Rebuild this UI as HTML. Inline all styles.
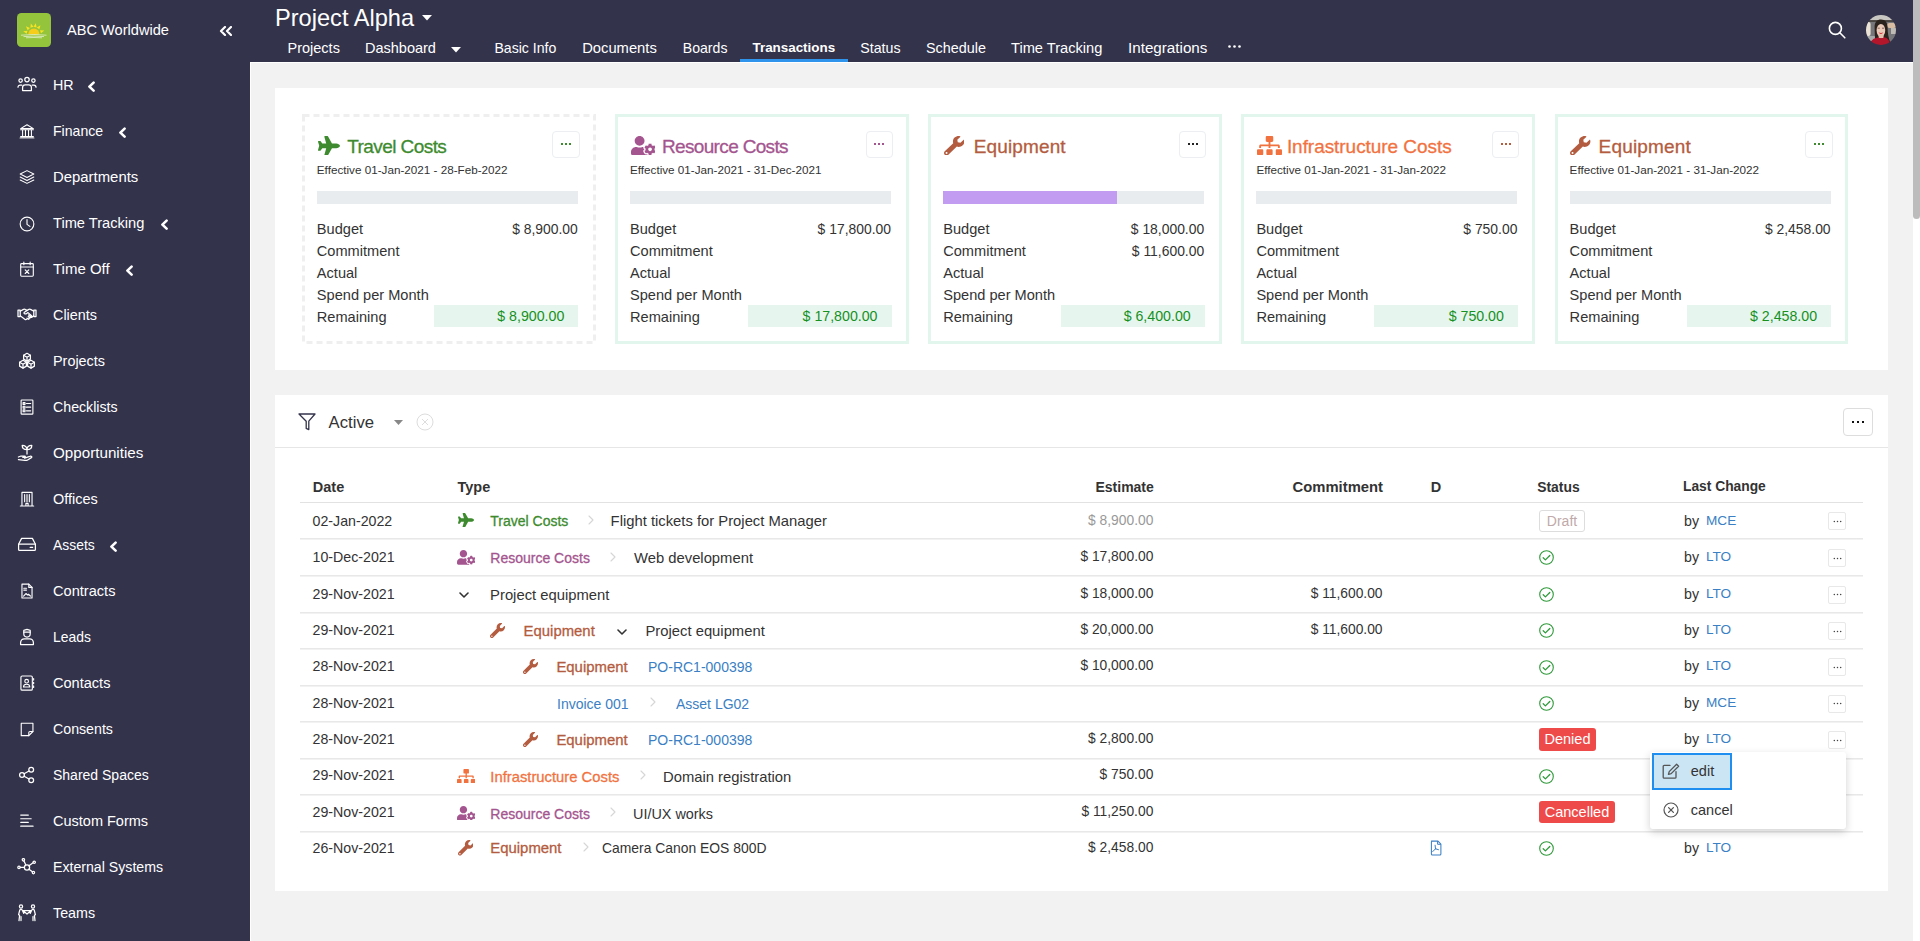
<!DOCTYPE html>
<html><head><meta charset="utf-8">
<style>
*{box-sizing:border-box;margin:0;padding:0}
html,body{width:1920px;height:941px;overflow:hidden;background:#f2f2f2;font-family:"Liberation Sans",sans-serif;color:#333}
svg{display:block}
#sb{position:absolute;left:0;top:0;width:250px;height:941px;background:#33334b}
#hd{position:absolute;left:250px;top:0;width:1663px;height:62px;background:#33334b}
#vline{position:absolute;left:250px;top:62px;width:1px;height:879px;background:#fff}
#hline{position:absolute;left:250px;top:62px;width:1663px;height:1px;background:#fff}
.logo{position:absolute;left:17px;top:13px}
.brand{position:absolute;left:67px;top:20px;line-height:20px;font-size:14.6px;color:#fff;white-space:nowrap}
.collapse{position:absolute;left:218.5px;top:25.5px}
.nav{position:absolute;left:0;width:250px;height:46px;line-height:46px;font-size:14.5px;color:#fff;white-space:nowrap}
.nav .ic{position:absolute;left:17px;top:14px}
.nav .tx{position:absolute;left:53px;top:0}
.nav .arr{position:absolute;top:19px}
.ptitle{position:absolute;left:275px;top:3px;font-size:23.6px;line-height:30px;color:#fff;white-space:nowrap}
.ptcaret{position:absolute;left:421.5px;top:14.5px}
.tabs{position:absolute;left:0;top:0}
.tab{position:absolute;top:38px;font-size:14.5px;line-height:20px;color:#fff;white-space:nowrap}
.tab.act{font-weight:bold;font-size:13.6px}
.uline{position:absolute;left:740px;top:59px;width:107.5px;height:3px;background:#2f95ec}
.dcaret{position:absolute;left:451px;top:46.5px}
.more{position:absolute;left:1227.5px;top:45px}
.search{position:absolute;left:1828px;top:21px}
.avatar{position:absolute;left:1866px;top:15px}
.scroll{position:absolute;left:1913px;top:0;width:7px;height:941px;background:#fff}
.thumb{position:absolute;left:1913px;top:0;width:7px;height:219px;background:#bcbcbc;border-radius:0 0 3.5px 3.5px}
.panel{position:absolute;background:#fff}
.card{position:absolute;top:114px;width:293.8px;height:230px;border:3px solid #e3f6ee;background:#fff}
.card.dash{border:3px solid transparent}
.dashsvg{position:absolute;left:-3px;top:-3px}
.card .ttl{position:absolute;top:18px;font-size:19px;letter-spacing:-0.45px;line-height:24px;white-space:nowrap;-webkit-text-stroke:0.3px currentColor}
.card .cic{position:absolute;left:12.8px;top:18.5px}
.card .eff{position:absolute;left:12px;top:45px;font-size:11.7px;line-height:16px;color:#333;white-space:nowrap}
.card .dots{position:absolute;left:247.5px;top:13.5px;width:27.5px;height:27.6px;border:1px solid #eceef1;border-radius:4px}
.card .bar{position:absolute;left:12px;top:74px;width:261px;height:13px;background:#e9ecef}
.card .fill{position:absolute;left:0;top:0;height:13px;background:#c29cf0}
.card .rows{position:absolute;left:12px;top:100.5px;width:261px;font-size:14.6px;line-height:22.2px;color:#333}
.card .r{position:relative;height:22.2px;white-space:nowrap}
.card .r .v{position:absolute;right:0;top:0;font-size:13.9px}
.card .rem{position:absolute;left:117.5px;top:87.3px;width:144px;height:22px;line-height:22px;background:#e6f6ee;color:#17901f;text-align:right;padding-right:14px;font-size:14.2px}
.fbar{position:absolute;left:275px;top:395px;width:1613px;height:53px;border-bottom:1px solid #e6e6e6}
.funnel{position:absolute;left:298px;top:413px}
.active{position:absolute;left:328.6px;top:411px;font-size:16.7px;line-height:24px;white-space:nowrap}
.fcaret{position:absolute;left:394px;top:420px}
.fx{position:absolute;left:416px;top:412.6px}
.bigbtn{position:absolute;left:1843px;top:408px;width:30px;height:28px;border:1px solid #ddd;border-radius:4px;padding:12px 0 0 8px}
.bigbtn svg{position:absolute;left:8px;top:12px}
.th{position:absolute;top:477px;font-size:14.5px;line-height:20px;font-weight:bold;white-space:nowrap;color:#333}
.thline{position:absolute;left:300px;top:502px;width:1563px;height:1px;background:#e2e2e2}
.rline{position:absolute;left:300px;width:1563px;height:2px;border-top:1px solid #e8e8e8;background:#f2f2f2}
.p{position:absolute;font-size:14.5px;line-height:20px;white-space:nowrap}
.est{right:766.7px;text-align:right;font-size:13.8px}
.com{right:537.5px;text-align:right;font-size:13.8px}
.draft{width:46px;height:22px;line-height:20px;border:1px solid #ddd;border-radius:3px;color:#bfaaaa;text-align:center;font-size:14px}
.badge{height:22.5px;line-height:22px;background:#ef4a4a;color:#fff;border-radius:3px;text-align:center;font-size:14.5px}
.rd{width:18px;height:18px;border:1px solid #e8e8e8;border-radius:2px;padding:6.8px 0 0 4.2px}
.menu{position:absolute;left:1650px;top:752px;width:196px;height:76.5px;background:#fff;border-radius:3px;box-shadow:0 3px 8px rgba(0,0,0,.18)}
.mi{position:absolute;left:1652px;top:753px;width:80px;height:37px;background:#cbe5f5;border:2px solid #1e8ff0}
.mtxt{position:absolute;font-size:14.5px;line-height:20px;color:#333}
</style></head><body>
<div id="sb">
<span class="logo"><svg width="34" height="34" viewBox="0 0 34 34" ><rect width="34" height="34" rx="4.5" fill="#94c43c"/>
<path d="M11.25 21.2a5.6 5.6 0 0 1 11.2 0z" fill="#f6cd1b"/>
<g fill="#f8e320"><path d="M10.50 17.64L6.22 18.15L9.67 20.73z"/><path d="M12.93 14.99L8.94 13.36L10.70 17.29z"/><path d="M16.46 13.83L13.82 10.43L13.38 14.71z"/><path d="M19.64 14.38L18.76 10.17L16.49 13.83z"/><path d="M22.34 16.37L23.47 12.22L19.78 14.45z"/><path d="M24.00 20.30L27.28 17.51L22.98 17.26z"/></g>
<path d="M4 22.2q13-1.4 25.5 0M6.5 23.6q10.5-1 20.5 0M9 24.8q8-.6 16 0" fill="none" stroke="#fff" stroke-width=".7" opacity=".85"/></svg></span>
<div class="brand">ABC Worldwide</div>
<span class="collapse"><svg width="13" height="10" viewBox="0 0 13 10" ><path d="M6 1L2 5l4 4M12 1L8 5l4 4" fill="none" stroke="#fff" stroke-width="2.2" stroke-linecap="round" stroke-linejoin="round"/></svg></span>
<div class="nav" style="top:62px"><span class="ic"><svg width="20" height="16" viewBox="0 0 20 16" ><g fill="none" stroke="#fff" stroke-width="1.25" stroke-linecap="round" stroke-linejoin="round"><circle cx="10" cy="3.6" r="2.2"/><circle cx="3.6" cy="4.6" r="1.7"/><circle cx="16.4" cy="4.6" r="1.7"/><path d="M5.6 14.6v-3.2a2.6 2.6 0 0 1 2.6-2.6h3.6a2.6 2.6 0 0 1 2.6 2.6v3.2z"/><path d="M1 11.2a2.2 2.2 0 0 1 2.2-2.2h1.6"/><path d="M19 11.2a2.2 2.2 0 0 0-2.2-2.2h-1.6"/></g></svg></span><span class="tx" style="font-size:14.3px">HR</span><span class="arr" style="left:87px"><svg width="9" height="11" viewBox="0 0 9 11" ><path d="M6.6 1.6L2.4 5.6l4.2 4" fill="none" stroke="#fff" stroke-width="2.6" stroke-linecap="round" stroke-linejoin="round"/></svg></span></div>
<div class="nav" style="top:108px"><span class="ic"><svg style="transform:scale(0.85);transform-origin:50% 50%" width="20" height="18" viewBox="0 0 20 18" ><g fill="none" stroke="#fff" stroke-width="1.25" stroke-linecap="round" stroke-linejoin="round"><path d="M2.5 6.2L10 1.6l7.5 4.6z"/><path d="M2.5 7.6h15M4.8 8.5v6M8.2 8.5v6M11.8 8.5v6M15.2 8.5v6M2.5 15.6h15M1.8 17.2h16.4"/></g></svg></span><span class="tx" style="font-size:14.1px">Finance</span><span class="arr" style="left:118px"><svg width="9" height="11" viewBox="0 0 9 11" ><path d="M6.6 1.6L2.4 5.6l4.2 4" fill="none" stroke="#fff" stroke-width="2.6" stroke-linecap="round" stroke-linejoin="round"/></svg></span></div>
<div class="nav" style="top:154px"><span class="ic"><svg style="transform:scale(0.85);transform-origin:50% 50%" width="20" height="18" viewBox="0 0 20 18" ><g fill="none" stroke="#fff" stroke-width="1.25" stroke-linecap="round" stroke-linejoin="round"><path d="M10 1.5l8 4-8 4-8-4z"/><path d="M2 9l8 4 8-4"/><path d="M2 12.5l8 4 8-4"/></g></svg></span><span class="tx" style="font-size:14.9px">Departments</span></div>
<div class="nav" style="top:200px"><span class="ic"><svg style="transform:scale(0.9);transform-origin:50% 50%" width="20" height="20" viewBox="0 0 20 20" ><g fill="none" stroke="#fff" stroke-width="1.25" stroke-linecap="round" stroke-linejoin="round"><circle cx="10" cy="10" r="7.6"/><path d="M10 5.2v5.2l3.2 2.2"/></g></svg></span><span class="tx" style="font-size:14.65px">Time Tracking</span><span class="arr" style="left:159.5px"><svg width="9" height="11" viewBox="0 0 9 11" ><path d="M6.6 1.6L2.4 5.6l4.2 4" fill="none" stroke="#fff" stroke-width="2.6" stroke-linecap="round" stroke-linejoin="round"/></svg></span></div>
<div class="nav" style="top:246px"><span class="ic"><svg style="transform:scale(0.9);transform-origin:50% 50%" width="20" height="18" viewBox="0 0 20 18" ><g fill="none" stroke="#fff" stroke-width="1.25" stroke-linecap="round" stroke-linejoin="round"><rect x="3" y="3" width="14" height="14" rx="1"/><path d="M3 6.8h14M6.5 1.2v3M13.5 1.2v3M8 10l4 4M12 10l-4 4"/></g></svg></span><span class="tx" style="font-size:15.0px">Time Off</span><span class="arr" style="left:125px"><svg width="9" height="11" viewBox="0 0 9 11" ><path d="M6.6 1.6L2.4 5.6l4.2 4" fill="none" stroke="#fff" stroke-width="2.6" stroke-linecap="round" stroke-linejoin="round"/></svg></span></div>
<div class="nav" style="top:292px"><span class="ic"><svg width="20" height="16" viewBox="0 0 20 16" ><g fill="none" stroke="#fff" stroke-width="1.25" stroke-linecap="round" stroke-linejoin="round"><path d="M1 4h2.2v6.6H1zM16.8 4H19v6.6h-2.2z"/><path d="M3.2 5.2l2.8-1.6c.9-.5 1.8-.5 2.6 0l1.4.7M16.8 5.2l-2.8-1.6c-.9-.5-1.8-.5-2.6 0L7.4 6.2c-.7.5-.5 1.5.4 1.6l1.2.1 2-1.3 3.6 3.2c.6.5-.1 1.4-.8 1l-2.2-1.8M3.2 9.8l4.6 3.4c.7.5 1.5.4 2-.1M13.6 10.9c.5.5-.2 1.3-.8.9l-1.6-1.2M12 12.3c.4.5-.2 1.2-.8.8l-1.2-.9M16.8 9.8l-2.2 1.6"/></g></svg></span><span class="tx" style="font-size:14.4px">Clients</span></div>
<div class="nav" style="top:338px"><span class="ic"><svg width="20" height="18" viewBox="0 0 20 18" ><g fill="none" stroke="#fff" stroke-width="1.25" stroke-linecap="round" stroke-linejoin="round"><path d="M10 1.3000000000000003l3.39 1.95v3.90l-3.39 1.95-3.39-1.95v-3.90z"/><path d="M6.61 3.25L10 5.2l3.39-1.95M10 5.2v3.90"/><path d="M6 8.299999999999999l3.39 1.95v3.90l-3.39 1.95-3.39-1.95v-3.90z"/><path d="M2.61 10.25L6 12.2l3.39-1.95M6 12.2v3.90"/><path d="M14 8.299999999999999l3.39 1.95v3.90l-3.39 1.95-3.39-1.95v-3.90z"/><path d="M10.61 10.25L14 12.2l3.39-1.95M14 12.2v3.90"/></g></svg></span><span class="tx" style="font-size:14.4px">Projects</span></div>
<div class="nav" style="top:384px"><span class="ic"><svg style="transform:scale(0.92);transform-origin:50% 50%" width="20" height="18" viewBox="0 0 20 18" ><g fill="none" stroke="#fff" stroke-width="1.25" stroke-linecap="round" stroke-linejoin="round"><rect x="3.6" y="1.4" width="12.8" height="15.4" rx=".8"/><path d="M5.8 4.2h2v2h-2zM5.8 8.2h2v2h-2zM5.8 12.2h2v2h-2zM9.4 5.2h4.6M9.4 9.2h4.6M9.4 13.2h4.6"/></g></svg></span><span class="tx" style="font-size:14.2px">Checklists</span></div>
<div class="nav" style="top:430px"><span class="ic"><svg width="20" height="18" viewBox="0 0 20 18" ><g fill="none" stroke="#fff" stroke-width="1.25" stroke-linecap="round" stroke-linejoin="round"><path d="M10 10V5.6M10 5.6C10 3 8 1.4 5.2 1.4c0 2.6 2 4.2 4.8 4.2zM10 5.6c0-2.6 2-4.2 4.8-4.2 0 2.6-2 4.2-4.8 4.2z"/><path d="M1.4 13l2.6-1h3.6c1 0 1 1.4 0 1.4H5.8M7.6 14.2l5.2-1.8c1.6-.6 2.6.6 1.6 1.2l-3.8 2.4c-.8.5-1.6.6-2.6.4L1.4 15.6"/></g></svg></span><span class="tx" style="font-size:15.2px">Opportunities</span></div>
<div class="nav" style="top:476px"><span class="ic"><svg style="transform:scale(0.9);transform-origin:50% 50%" width="20" height="18" viewBox="0 0 20 18" ><g fill="none" stroke="#fff" stroke-width="1.25" stroke-linecap="round" stroke-linejoin="round"><path d="M4.4 16.8V1.6h11.2v15.2M2.6 16.8h14.8M7.4 4v8M10 4v8M12.6 4v8M8.8 16.8v-3h2.4v3"/></g></svg></span><span class="tx" style="font-size:14.5px">Offices</span></div>
<div class="nav" style="top:522px"><span class="ic"><svg width="20" height="16" viewBox="0 0 20 16" ><g fill="none" stroke="#fff" stroke-width="1.25" stroke-linecap="round" stroke-linejoin="round"><path d="M1.6 8.2L4.6 2.4h10.8l3 5.8v5.2c0 .6-.4 1-1 1H2.6c-.6 0-1-.4-1-1z"/><path d="M1.6 8.2h16.8M13.2 11.4h2.4"/></g></svg></span><span class="tx" style="font-size:13.9px">Assets</span><span class="arr" style="left:109px"><svg width="9" height="11" viewBox="0 0 9 11" ><path d="M6.6 1.6L2.4 5.6l4.2 4" fill="none" stroke="#fff" stroke-width="2.6" stroke-linecap="round" stroke-linejoin="round"/></svg></span></div>
<div class="nav" style="top:568px"><span class="ic"><svg style="transform:scale(0.9);transform-origin:50% 50%" width="20" height="18" viewBox="0 0 20 18" ><g fill="none" stroke="#fff" stroke-width="1.25" stroke-linecap="round" stroke-linejoin="round"><path d="M4.4 1.4h7.6l3.6 3.6v11.8H4.4z"/><path d="M12 1.4v3.6h3.6M6.4 6h3M6.4 8h3M6.2 14.6l2.6-2.8 1.8 1.6 1-.8 2.2 2"/></g></svg></span><span class="tx" style="font-size:14.6px">Contracts</span></div>
<div class="nav" style="top:614px"><span class="ic"><svg width="20" height="18" viewBox="0 0 20 18" ><g fill="none" stroke="#fff" stroke-width="1.25" stroke-linecap="round" stroke-linejoin="round"><path d="M6.8 2.4l3.2-1 3.2 1v3.4a3.2 3.2 0 0 1-6.4 0z"/><path d="M6.8 4h6.4M3.6 16.6v-1.8c0-2.2 1.6-4 3.8-4h5.2c2.2 0 3.8 1.8 3.8 4v1.8z"/></g></svg></span><span class="tx" style="font-size:13.9px">Leads</span></div>
<div class="nav" style="top:660px"><span class="ic"><svg style="transform:scale(0.92);transform-origin:50% 50%" width="20" height="18" viewBox="0 0 20 18" ><g fill="none" stroke="#fff" stroke-width="1.25" stroke-linecap="round" stroke-linejoin="round"><rect x="3.4" y="1.4" width="12.4" height="15.4" rx="1.4"/><circle cx="9.6" cy="7" r="2"/><path d="M6.2 13.4c0-1.8 1.4-3 3.4-3s3.4 1.2 3.4 3zM17.2 4.2v1.6M17.2 8.2v1.6M17.2 12.2v1.6"/></g></svg></span><span class="tx" style="font-size:14.55px">Contacts</span></div>
<div class="nav" style="top:706px"><span class="ic"><svg style="transform:scale(0.9);transform-origin:50% 50%" width="20" height="18" viewBox="0 0 20 18" ><g fill="none" stroke="#fff" stroke-width="1.25" stroke-linecap="round" stroke-linejoin="round"><path d="M3.6 2.6h13v9.2l-4.6 4.6H3.6z"/><path d="M16.6 11.8h-3.4c-.7 0-1.2.5-1.2 1.2v3.4"/></g></svg></span><span class="tx" style="font-size:14.2px">Consents</span></div>
<div class="nav" style="top:752px"><span class="ic"><svg width="20" height="18" viewBox="0 0 20 18" ><g fill="none" stroke="#fff" stroke-width="1.25" stroke-linecap="round" stroke-linejoin="round"><circle cx="5" cy="9" r="2.4"/><circle cx="14.2" cy="3.8" r="2.4"/><circle cx="14.2" cy="14.2" r="2.4"/><path d="M7.1 7.8l4.9-2.8M7.1 10.2l4.9 2.8"/></g></svg></span><span class="tx" style="font-size:14.0px">Shared Spaces</span></div>
<div class="nav" style="top:798px"><span class="ic"><svg style="transform:scale(0.95);transform-origin:50% 50%" width="20" height="18" viewBox="0 0 20 18" ><g fill="none" stroke="#fff" stroke-width="1.25" stroke-linecap="round" stroke-linejoin="round"><path d="M3.4 2.8h8M3.4 6.6h11M3.4 10.4h8M3.4 14.4h13"/></g></svg></span><span class="tx" style="font-size:14.5px">Custom Forms</span></div>
<div class="nav" style="top:844px"><span class="ic"><svg width="20" height="18" viewBox="0 0 20 18" ><g fill="none" stroke="#fff" stroke-width="1.25" stroke-linecap="round" stroke-linejoin="round"><circle cx="10" cy="9.4" r="2.6"/><circle cx="6.4" cy="1.8" r="1.2"/><circle cx="17.2" cy="4.2" r="1.2"/><circle cx="2" cy="9.4" r="1.2"/><circle cx="16.4" cy="14.6" r="1.2"/><path d="M7 3l1.8 4M16 4.8l-4 3M3.2 9.4h4.2M15.4 13.8l-3.4-2.6"/></g></svg></span><span class="tx" style="font-size:14.15px">External Systems</span></div>
<div class="nav" style="top:890px"><span class="ic"><svg width="20" height="18" viewBox="0 0 20 18" ><g fill="none" stroke="#fff" stroke-width="1.25" stroke-linecap="round" stroke-linejoin="round"><circle cx="4" cy="2.4" r="1.6"/><circle cx="16" cy="2.4" r="1.6"/><path d="M2 16.6l.6-5.4-1-.6L2.8 6c.4-1 2-1 2.4 0l1.6 3.4M18 16.6l-.6-5.4 1-.6L17.2 6c-.4-1-2-1-2.4 0l-1.6 3.4M4 16.6v-4M16 16.6v-4M6 6.6h8l-4 3.4z"/></g></svg></span><span class="tx" style="font-size:14.3px">Teams</span></div>
</div>
<div id="hd"></div>
<div id="vline"></div><div id="hline"></div>
<div class="ptitle">Project Alpha</div><span class="ptcaret"><svg width="10" height="6" viewBox="0 0 10 6" ><path d="M0 0h10L5 5.5z" fill="#fff"/></svg></span>
<div class="tabs"><span class="tab" style="left:287.5px;font-size:14.5px">Projects</span><span class="tab" style="left:365px;font-size:14.5px">Dashboard</span><span class="tab" style="left:494.4px;font-size:14.1px">Basic Info</span><span class="tab" style="left:582.2px;font-size:14.75px">Documents</span><span class="tab" style="left:682.8px;font-size:14.1px">Boards</span><span class="tab act" style="left:752.5px;font-size:13.4px">Transactions</span><span class="tab" style="left:860.3px;font-size:14.2px">Status</span><span class="tab" style="left:926px;font-size:14.4px">Schedule</span><span class="tab" style="left:1011px;font-size:14.65px">Time Tracking</span><span class="tab" style="left:1128px;font-size:15.2px">Integrations</span></div>
<span class="dcaret"><svg width="10" height="6" viewBox="0 0 10 6" ><path d="M0 0h10L5 5.5z" fill="#fff"/></svg></span>
<span class="more"><svg width="13" height="3" viewBox="0 0 13 3" ><g fill="#fff"><circle cx="1.5" cy="1.5" r="1.3"/><circle cx="6.5" cy="1.5" r="1.3"/><circle cx="11.5" cy="1.5" r="1.3"/></g></svg></span>
<div class="uline"></div>
<span class="search"><svg width="18" height="18" viewBox="0 0 18 18" ><circle cx="7.4" cy="7.4" r="6" fill="none" stroke="#fff" stroke-width="1.6"/><path d="M11.8 11.8l5 5" stroke="#fff" stroke-width="1.6" stroke-linecap="round"/></svg></span>
<span class="avatar"><svg width="30" height="30" viewBox="0 0 30 30" ><defs><clipPath id="av"><circle cx="15" cy="15" r="15"/></clipPath><filter id="bl" x="-10%" y="-10%" width="120%" height="120%"><feGaussianBlur stdDeviation="0.7"/></filter></defs>
<g clip-path="url(#av)"><g filter="url(#bl)"><rect x="-2" y="-2" width="34" height="34" fill="#76777a"/><rect x="-2" y="-2" width="34" height="7.5" fill="#c9c7c1"/><rect x="-2" y="5.2" width="34" height="1.6" fill="#3e3833"/>
<rect x="0" y="7" width="4.6" height="14" rx="2" fill="#ebe3d6"/><rect x="21" y="8" width="9" height="5" rx="2.5" fill="#d9bda2"/><rect x="25" y="13" width="5" height="6" fill="#bfbcb6"/><rect x="0" y="21" width="10" height="9" fill="#a7aaa8"/>
<path d="M8.6 12c0-5 2.4-7.6 6.4-7.6 4.4 0 6.6 3 6.6 8.4 0 5 .8 9.6 2.6 14.6L22 30H9.6c-.6-6-1-12-1-18z" fill="#2b201c"/>
<ellipse cx="14.9" cy="15.4" rx="4.3" ry="6.4" fill="#eacab9"/><path d="M11.6 13.2h2.2M16 13.2h2.2" stroke="#5a3a30" stroke-width=".7"/><rect x="12.6" y="19.5" width="5" height="4" fill="#e4bfad"/>
<path d="M12.4 17.6q2.6 2.6 5 0q-2.4 .6-5 0z" fill="#d0202c"/>
<path d="M3.5 30c.8-4.6 4.6-7.2 8.6-7.6 1.8 1 4.4 1 6.4-.2 2.2.6 4 2 5 4.2L24 30z" fill="#b3122a"/></g></g></svg></span>
<div class="scroll"></div><div class="thumb"></div>

<div class="panel" style="left:275px;top:88px;width:1613px;height:282px"></div>
<div class="card dash" style="left:301.8px"><span class="dashsvg"><svg width="294" height="230" viewBox="0 0 294 230" ><rect x="1.5" y="1.5" width="291" height="227" fill="none" stroke="#efefef" stroke-width="3" stroke-dasharray="6 4"/></svg></span>
<span class="cic"><svg width="22" height="19.7" viewBox="0 0 576 512" preserveAspectRatio="none"><path fill="#3d8b2e" d="M480 192H365.71L260.61 8.06A16.014 16.014 0 0 0 246.71 0h-65.5c-10.63 0-18.3 10.17-15.38 20.39L214.86 192H112l-43.2-57.6c-3.02-4.03-7.77-6.4-12.8-6.4H16.01C5.6 128-2.04 137.78.49 147.88L32 256 .49 364.12C-2.04 374.22 5.6 384 16.01 384H56c5.04 0 9.78-2.37 12.8-6.4L112 320h102.86l-49.03 171.6c-2.92 10.22 4.75 20.4 15.38 20.4h65.5c5.74 0 11.04-3.08 13.89-8.06L365.71 320H480c35.35 0 96-28.65 96-64s-60.65-64-96-64z"/></svg></span><div class="ttl" style="color:#3d8b2e;left:42.5px;letter-spacing:-0.58px">Travel Costs</div>
<div class="eff">Effective 01-Jan-2021 - 28-Feb-2022</div>
<div class="dots"></div><span style="position:absolute;left:256.20px;top:26px"><svg width="10" height="2" viewBox="0 0 10 2" shape-rendering="crispEdges"><g fill="#3d8b2e"><rect x="0" y="0" width="2" height="2"/><rect x="4" y="0" width="2" height="2"/><rect x="8" y="0" width="2" height="2"/></g></svg></span>
<div class="bar"></div>
<div class="rows"><div class="r">Budget<span class="v">$ 8,900.00</span></div><div class="r">Commitment<span class="v"></span></div><div class="r">Actual</div><div class="r">Spend per Month</div><div class="r">Remaining</div>
<div class="rem">$ 8,900.00</div></div>
</div>
<div class="card" style="left:615px"><span class="dashsvg"></span>
<span class="cic"><svg width="24.6" height="19.4" viewBox="0 0 640 512" preserveAspectRatio="none"><path fill="#a4558f" d="M610.5 373.3c2.6-14.1 2.6-28.5 0-42.6l25.8-14.9c3-1.7 4.3-5.2 3.3-8.5-6.7-21.6-18.2-41.2-33.2-57.4-2.3-2.5-6-3.1-9-1.4l-25.8 14.9c-10.9-9.3-23.4-16.5-36.9-21.3v-29.8c0-3.4-2.4-6.4-5.7-7.1-22.3-5-45-4.8-66.2 0-3.3.7-5.7 3.7-5.7 7.1v29.8c-13.5 4.8-26 12-36.9 21.3l-25.8-14.9c-2.9-1.700-6.7-1.1-9 1.4-15 16.2-26.5 35.8-33.2 57.4-1 3.3.4 6.8 3.3 8.5l25.8 14.9c-2.6 14.1-2.6 28.5 0 42.6l-25.8 14.9c-3 1.7-4.3 5.2-3.3 8.5 6.7 21.6 18.2 41.1 33.2 57.4 2.3 2.5 6 3.1 9 1.4l25.8-14.9c10.9 9.3 23.4 16.5 36.9 21.3v29.8c0 3.4 2.4 6.4 5.7 7.1 22.3 5 45 4.8 66.2 0 3.3-.7 5.7-3.7 5.7-7.1v-29.8c13.5-4.8 26-12 36.9-21.3l25.8 14.9c2.9 1.7 6.7 1.1 9-1.4 15-16.2 26.5-35.8 33.2-57.4 1-3.3-.4-6.8-3.3-8.5l-25.8-14.9zM496 400.5c-26.8 0-48.5-21.8-48.5-48.5s21.8-48.5 48.5-48.5 48.5 21.8 48.5 48.5-21.7 48.5-48.5 48.5zM224 256c70.7 0 128-57.3 128-128S294.7 0 224 0 96 57.3 96 128s57.3 128 128 128zm201.2 226.5c-2.3-1.2-4.6-2.6-6.8-3.9l-7.9 4.6c-6 3.4-12.8 5.3-19.6 5.300-10.9 0-21.4-4.6-28.9-12.6-18.3-19.8-32.3-43.9-40.2-69.6-5.5-17.7 1.9-36.4 17.9-45.7l7.9-4.6c-.1-2.6-.1-5.2 0-7.8l-7.9-4.6c-16-9.2-23.4-28-17.9-45.7.9-2.9 2.2-5.8 3.2-8.7-3.8-.3-7.5-1.2-11.4-1.2h-16.7c-22.2 10.2-46.9 16-72.9 16s-50.6-5.8-72.9-16h-16.7C60.2 288 0 348.2 0 422.4V464c0 26.5 21.5 48 48 48h352c10.1 0 19.5-3.2 27.3-8.5-1.2-3.8-2.1-7.7-2.1-11.9v-9.1z"/></svg></span><div class="ttl" style="color:#a4558f;left:44px;letter-spacing:-0.66px">Resource Costs</div>
<div class="eff">Effective 01-Jan-2021 - 31-Dec-2021</div>
<div class="dots"></div><span style="position:absolute;left:256.00px;top:26px"><svg width="10" height="2" viewBox="0 0 10 2" shape-rendering="crispEdges"><g fill="#a4558f"><rect x="0" y="0" width="2" height="2"/><rect x="4" y="0" width="2" height="2"/><rect x="8" y="0" width="2" height="2"/></g></svg></span>
<div class="bar"></div>
<div class="rows"><div class="r">Budget<span class="v">$ 17,800.00</span></div><div class="r">Commitment<span class="v"></span></div><div class="r">Actual</div><div class="r">Spend per Month</div><div class="r">Remaining</div>
<div class="rem">$ 17,800.00</div></div>
</div>
<div class="card" style="left:928.2px"><span class="dashsvg"></span>
<span class="cic"><svg width="20.4" height="19.4" viewBox="0 0 512 512" preserveAspectRatio="none"><path fill="#b45c40" d="M507.73 109.1c-2.24-9.03-13.54-12.09-20.12-5.51l-74.36 74.36-67.88-11.31-11.31-67.88 74.36-74.36c6.62-6.62 3.43-17.9-5.66-20.16-47.38-11.74-99.55.91-136.58 37.93-39.64 39.64-50.550 97.1-34.05 147.2L18.74 402.76c-24.99 24.99-24.99 65.51 0 90.5 24.99 24.99 65.51 24.99 90.5 0l213.21-213.21c50.12 16.71 107.47 5.68 147.37-34.22 37.07-37.07 49.7-89.32 37.91-136.73zM64 472c-13.25 0-24-10.75-24-24 0-13.26 10.75-24 24-24s24 10.74 24 24c0 13.25-10.75 24-24 24z"/></svg></span><div class="ttl" style="color:#b45c40;left:42.5px;letter-spacing:0.14px">Equipment</div>
<div class="eff"></div>
<div class="dots"></div><span style="position:absolute;left:256.80px;top:26px"><svg width="10" height="2" viewBox="0 0 10 2" shape-rendering="crispEdges"><g fill="#222"><rect x="0" y="0" width="2" height="2"/><rect x="4" y="0" width="2" height="2"/><rect x="8" y="0" width="2" height="2"/></g></svg></span>
<div class="bar"><div class="fill" style="width:174px"></div></div>
<div class="rows"><div class="r">Budget<span class="v">$ 18,000.00</span></div><div class="r">Commitment<span class="v">$ 11,600.00</span></div><div class="r">Actual</div><div class="r">Spend per Month</div><div class="r">Remaining</div>
<div class="rem">$ 6,400.00</div></div>
</div>
<div class="card" style="left:1241.4px"><span class="dashsvg"></span>
<span class="cic"><svg width="25" height="19.3" viewBox="0 0 640 512" preserveAspectRatio="none"><path fill="#f2723f" d="M128 352H32c-17.67 0-32 14.33-32 32v96c0 17.67 14.33 32 32 32h96c17.67 0 32-14.33 32-32v-96c0-17.67-14.33-32-32-32zm-24-80h192v48h48v-48h192v48h48v-57.59c0-21.17-17.23-38.41-38.41-38.41H344v-64h40c17.67 0 32-14.33 32-32V32c0-17.67-14.33-32-32-32H256c-17.67 0-32 14.33-32 32v96c0 17.670 14.33 32 32 32h40v64H94.41C73.23 224 56 241.23 56 262.41V320h48v-48zm264 80h-96c-17.67 0-32 14.33-32 32v96c0 17.67 14.33 32 32 32h96c17.67 0 32-14.33 32-32v-96c0-17.67-14.33-32-32-32zm240 0h-96c-17.67 0-32 14.33-32 32v96c0 17.67 14.330 32 32 32h96c17.67 0 32-14.33 32-32v-96c0-17.67-14.33-32-32-32z"/></svg></span><div class="ttl" style="color:#f2723f;left:42.5px;letter-spacing:-0.05px">Infrastructure Costs</div>
<div class="eff">Effective 01-Jan-2021 - 31-Jan-2022</div>
<div class="dots"></div><span style="position:absolute;left:256.60px;top:26px"><svg width="10" height="2" viewBox="0 0 10 2" shape-rendering="crispEdges"><g fill="#b45c40"><rect x="0" y="0" width="2" height="2"/><rect x="4" y="0" width="2" height="2"/><rect x="8" y="0" width="2" height="2"/></g></svg></span>
<div class="bar"></div>
<div class="rows"><div class="r">Budget<span class="v">$ 750.00</span></div><div class="r">Commitment<span class="v"></span></div><div class="r">Actual</div><div class="r">Spend per Month</div><div class="r">Remaining</div>
<div class="rem">$ 750.00</div></div>
</div>
<div class="card" style="left:1554.6px"><span class="dashsvg"></span>
<span class="cic"><svg width="20.4" height="19.4" viewBox="0 0 512 512" preserveAspectRatio="none"><path fill="#b45c40" d="M507.73 109.1c-2.24-9.03-13.54-12.09-20.12-5.51l-74.36 74.36-67.88-11.31-11.31-67.88 74.36-74.36c6.62-6.62 3.43-17.9-5.66-20.16-47.38-11.74-99.55.91-136.58 37.93-39.64 39.64-50.550 97.1-34.05 147.2L18.74 402.76c-24.99 24.99-24.99 65.51 0 90.5 24.99 24.99 65.51 24.99 90.5 0l213.21-213.21c50.12 16.71 107.47 5.68 147.37-34.22 37.07-37.07 49.7-89.32 37.91-136.73zM64 472c-13.25 0-24-10.75-24-24 0-13.26 10.75-24 24-24s24 10.74 24 24c0 13.25-10.75 24-24 24z"/></svg></span><div class="ttl" style="color:#b45c40;left:41px;letter-spacing:0.16px">Equipment</div>
<div class="eff">Effective 01-Jan-2021 - 31-Jan-2022</div>
<div class="dots"></div><span style="position:absolute;left:256.40px;top:26px"><svg width="10" height="2" viewBox="0 0 10 2" shape-rendering="crispEdges"><g fill="#3d8b2e"><rect x="0" y="0" width="2" height="2"/><rect x="4" y="0" width="2" height="2"/><rect x="8" y="0" width="2" height="2"/></g></svg></span>
<div class="bar"></div>
<div class="rows"><div class="r">Budget<span class="v">$ 2,458.00</span></div><div class="r">Commitment<span class="v"></span></div><div class="r">Actual</div><div class="r">Spend per Month</div><div class="r">Remaining</div>
<div class="rem">$ 2,458.00</div></div>
</div>

<div class="panel" style="left:275px;top:395px;width:1613px;height:496px"></div>
<div class="fbar"></div>
<span class="funnel"><svg width="18" height="18" viewBox="0 0 18 18" ><path d="M1 1h16l-6.2 7.2v8.4L8.2 15.4V8.2z" fill="none" stroke="#33334b" stroke-width="1.3" stroke-linejoin="round"/></svg></span>
<div class="active">Active</div>
<span class="fcaret"><svg width="9" height="6" viewBox="0 0 9 6" ><path d="M0 0h9L4.5 5z" fill="#888"/></svg></span>
<span class="fx"><svg width="18" height="18" viewBox="0 0 18 18" ><circle cx="9" cy="9" r="8" fill="none" stroke="#ddd" stroke-width="1"/><path d="M6 6l6 6M12 6l-6 6" stroke="#ddd" stroke-width="1"/></svg></span>
<div class="bigbtn"><svg width="12" height="2" viewBox="0 0 12 2" shape-rendering="crispEdges"><g fill="#111"><rect x="0" y="0" width="2" height="2"/><rect x="5" y="0" width="2" height="2"/><rect x="10" y="0" width="2" height="2"/></g></svg></div>

<div class="th" style="left:312.8px">Date</div>
<div class="th" style="left:457.5px">Type</div>
<div class="th" style="right:766.2px;font-size:14px">Estimate</div>
<div class="th" style="right:537px;font-size:14.8px">Commitment</div>
<div class="th" style="left:1430.8px">D</div>
<div class="th" style="left:1537.2px;font-size:13.9px">Status</div>
<div class="th" style="left:1683px;font-size:13.8px">Last Change</div>
<div class="thline"></div>
<div id="rows">
<div class="rline" style="top:538.40px"></div>
<div class="rline" style="top:574.95px"></div>
<div class="rline" style="top:611.50px"></div>
<div class="rline" style="top:648.05px"></div>
<div class="rline" style="top:684.60px"></div>
<div class="rline" style="top:721.15px"></div>
<div class="rline" style="top:757.70px"></div>
<div class="rline" style="top:794.25px"></div>
<div class="rline" style="top:830.80px"></div>
<span class="p " style="left:312.6px;top:510.50px;font-size:14.2px">02-Jan-2022</span><span class="p " style="left:458px;top:513.00px;"><svg width="16" height="14.2" viewBox="0 0 576 512" preserveAspectRatio="none"><path fill="#3d8b2e" d="M480 192H365.71L260.61 8.06A16.014 16.014 0 0 0 246.71 0h-65.5c-10.63 0-18.3 10.17-15.38 20.39L214.86 192H112l-43.2-57.6c-3.02-4.03-7.77-6.4-12.8-6.4H16.01C5.6 128-2.04 137.78.49 147.88L32 256 .49 364.12C-2.04 374.22 5.6 384 16.01 384H56c5.04 0 9.78-2.37 12.8-6.4L112 320h102.86l-49.03 171.6c-2.92 10.22 4.75 20.4 15.38 20.4h65.5c5.74 0 11.04-3.08 13.89-8.06L365.71 320H480c35.35 0 96-28.65 96-64s-60.65-64-96-64z"/></svg></span><span class="p " style="left:490.3px;top:510.50px;color:#3d8b2e;font-size:14.0px;-webkit-text-stroke:0.3px #3d8b2e">Travel Costs</span><span class="p " style="left:588px;top:515.00px;"><svg width="6" height="10" viewBox="0 0 6 10" ><path d="M1 1l4 4-4 4" fill="none" stroke="#d6d6d6" stroke-width="1.1" stroke-linecap="round" stroke-linejoin="round"/></svg></span><span class="p " style="left:610.6px;top:510.50px;color:#333;font-size:14.8px">Flight tickets for Project Manager</span><span class="p est" style="top:510.50px;color:#999">$ 8,900.00</span><span class="p draft" style="left:1539px;top:510.40px;">Draft</span><span class="p " style="left:1684px;top:510.50px;font-size:14.2px">by</span><span class="p " style="left:1706px;top:510.50px;color:#3b7fc4;font-size:13.6px">MCE</span><span class="p rd" style="left:1828px;top:512.40px;"><svg width="9" height="3" viewBox="0 0 9 3" ><g fill="#444"><circle cx="1.3" cy="1.5" r=".75"/><circle cx="4.5" cy="1.5" r=".75"/><circle cx="7.7" cy="1.5" r=".75"/></g></svg></span>
<span class="p " style="left:312.6px;top:547.10px;font-size:14.2px">10-Dec-2021</span><span class="p " style="left:457px;top:549.96px;"><svg width="18.4" height="14.7" viewBox="0 0 640 512" preserveAspectRatio="none"><path fill="#a4558f" d="M610.5 373.3c2.6-14.1 2.6-28.5 0-42.6l25.8-14.9c3-1.7 4.3-5.2 3.3-8.5-6.7-21.6-18.2-41.2-33.2-57.4-2.3-2.5-6-3.1-9-1.4l-25.8 14.9c-10.9-9.3-23.4-16.5-36.9-21.3v-29.8c0-3.4-2.4-6.4-5.7-7.1-22.3-5-45-4.8-66.2 0-3.3.7-5.7 3.7-5.7 7.1v29.8c-13.5 4.8-26 12-36.9 21.3l-25.8-14.9c-2.9-1.700-6.7-1.1-9 1.4-15 16.2-26.5 35.8-33.2 57.4-1 3.3.4 6.8 3.3 8.5l25.8 14.9c-2.6 14.1-2.6 28.5 0 42.6l-25.8 14.9c-3 1.7-4.3 5.2-3.3 8.5 6.7 21.6 18.2 41.1 33.2 57.4 2.3 2.5 6 3.1 9 1.4l25.8-14.9c10.9 9.3 23.4 16.5 36.9 21.3v29.8c0 3.4 2.4 6.4 5.7 7.1 22.3 5 45 4.8 66.2 0 3.3-.7 5.7-3.7 5.7-7.1v-29.8c13.5-4.8 26-12 36.9-21.3l25.8 14.9c2.9 1.7 6.7 1.1 9-1.4 15-16.2 26.5-35.8 33.2-57.4 1-3.3-.4-6.8-3.3-8.5l-25.8-14.9zM496 400.5c-26.8 0-48.5-21.8-48.5-48.5s21.8-48.5 48.5-48.5 48.5 21.8 48.5 48.5-21.7 48.5-48.5 48.5zM224 256c70.7 0 128-57.3 128-128S294.7 0 224 0 96 57.3 96 128s57.3 128 128 128zm201.2 226.5c-2.3-1.2-4.6-2.6-6.8-3.9l-7.9 4.6c-6 3.4-12.8 5.3-19.6 5.300-10.9 0-21.4-4.6-28.9-12.6-18.3-19.8-32.3-43.9-40.2-69.6-5.5-17.7 1.9-36.4 17.9-45.7l7.9-4.6c-.1-2.6-.1-5.2 0-7.8l-7.9-4.6c-16-9.2-23.4-28-17.9-45.7.9-2.9 2.2-5.8 3.2-8.7-3.8-.3-7.5-1.2-11.4-1.2h-16.7c-22.2 10.2-46.9 16-72.9 16s-50.6-5.8-72.9-16h-16.7C60.2 288 0 348.2 0 422.4V464c0 26.5 21.5 48 48 48h352c10.1 0 19.5-3.2 27.3-8.5-1.2-3.8-2.1-7.7-2.1-11.9v-9.1z"/></svg></span><span class="p " style="left:490.3px;top:547.70px;color:#a4558f;font-size:14.0px;-webkit-text-stroke:0.3px #a4558f">Resource Costs</span><span class="p " style="left:610px;top:551.60px;"><svg width="6" height="10" viewBox="0 0 6 10" ><path d="M1 1l4 4-4 4" fill="none" stroke="#d6d6d6" stroke-width="1.1" stroke-linecap="round" stroke-linejoin="round"/></svg></span><span class="p " style="left:634px;top:547.70px;color:#333;font-size:14.8px">Web development</span><span class="p est" style="top:547.10px;color:#333">$ 17,800.00</span><span class="p " style="left:1538.5px;top:550.30px;"><svg width="15" height="15" viewBox="0 0 15 15" ><circle cx="7.5" cy="7.5" r="6.8" fill="none" stroke="#2f9a3a" stroke-width="1.1"/><path d="M4.2 7.7l2.2 2.2 4.4-4.4" fill="none" stroke="#2f9a3a" stroke-width="1.3" stroke-linecap="round" stroke-linejoin="round"/></svg></span><span class="p " style="left:1684px;top:547.10px;font-size:14.2px">by</span><span class="p " style="left:1706px;top:547.10px;color:#3b7fc4;font-size:13.6px">LTO</span><span class="p rd" style="left:1828px;top:549.00px;"><svg width="9" height="3" viewBox="0 0 9 3" ><g fill="#444"><circle cx="1.3" cy="1.5" r=".75"/><circle cx="4.5" cy="1.5" r=".75"/><circle cx="7.7" cy="1.5" r=".75"/></g></svg></span>
<span class="p " style="left:312.6px;top:583.80px;font-size:14.2px">29-Nov-2021</span><span class="p " style="left:458.5px;top:592.40px;"><svg width="10" height="6" viewBox="0 0 10 6" ><path d="M1 1l4 4 4-4" fill="none" stroke="#333" stroke-width="1.6" stroke-linecap="round" stroke-linejoin="round"/></svg></span><span class="p " style="left:490.1px;top:584.60px;color:#333;font-size:14.8px">Project equipment</span><span class="p est" style="top:583.80px;color:#333">$ 18,000.00</span><span class="p com" style="top:583.80px">$ 11,600.00</span><span class="p " style="left:1538.5px;top:587.00px;"><svg width="15" height="15" viewBox="0 0 15 15" ><circle cx="7.5" cy="7.5" r="6.8" fill="none" stroke="#2f9a3a" stroke-width="1.1"/><path d="M4.2 7.7l2.2 2.2 4.4-4.4" fill="none" stroke="#2f9a3a" stroke-width="1.3" stroke-linecap="round" stroke-linejoin="round"/></svg></span><span class="p " style="left:1684px;top:583.80px;font-size:14.2px">by</span><span class="p " style="left:1706px;top:583.80px;color:#3b7fc4;font-size:13.6px">LTO</span><span class="p rd" style="left:1828px;top:585.70px;"><svg width="9" height="3" viewBox="0 0 9 3" ><g fill="#444"><circle cx="1.3" cy="1.5" r=".75"/><circle cx="4.5" cy="1.5" r=".75"/><circle cx="7.7" cy="1.5" r=".75"/></g></svg></span>
<span class="p " style="left:312.6px;top:620.10px;font-size:14.2px">29-Nov-2021</span><span class="p " style="left:490px;top:623.20px;"><svg width="15" height="15" viewBox="0 0 512 512" preserveAspectRatio="none"><path fill="#b45c40" d="M507.73 109.1c-2.24-9.03-13.54-12.09-20.12-5.51l-74.36 74.36-67.88-11.31-11.31-67.88 74.36-74.36c6.62-6.62 3.43-17.9-5.66-20.16-47.38-11.74-99.55.91-136.58 37.93-39.64 39.64-50.550 97.1-34.05 147.2L18.74 402.76c-24.99 24.99-24.99 65.51 0 90.5 24.99 24.99 65.51 24.99 90.5 0l213.21-213.21c50.12 16.71 107.47 5.68 147.37-34.22 37.07-37.07 49.7-89.32 37.91-136.73zM64 472c-13.25 0-24-10.75-24-24 0-13.26 10.75-24 24-24s24 10.74 24 24c0 13.25-10.75 24-24 24z"/></svg></span><span class="p " style="left:523.6px;top:621.10px;color:#b45c40;font-size:14.9px;-webkit-text-stroke:0.3px #b45c40">Equipment</span><span class="p " style="left:617px;top:628.70px;"><svg width="10" height="6" viewBox="0 0 10 6" ><path d="M1 1l4 4 4-4" fill="none" stroke="#333" stroke-width="1.6" stroke-linecap="round" stroke-linejoin="round"/></svg></span><span class="p " style="left:645.5px;top:621.10px;color:#333;font-size:14.8px">Project equipment</span><span class="p est" style="top:620.10px;color:#333">$ 20,000.00</span><span class="p com" style="top:620.10px">$ 11,600.00</span><span class="p " style="left:1538.5px;top:623.30px;"><svg width="15" height="15" viewBox="0 0 15 15" ><circle cx="7.5" cy="7.5" r="6.8" fill="none" stroke="#2f9a3a" stroke-width="1.1"/><path d="M4.2 7.7l2.2 2.2 4.4-4.4" fill="none" stroke="#2f9a3a" stroke-width="1.3" stroke-linecap="round" stroke-linejoin="round"/></svg></span><span class="p " style="left:1684px;top:620.10px;font-size:14.2px">by</span><span class="p " style="left:1706px;top:620.10px;color:#3b7fc4;font-size:13.6px">LTO</span><span class="p rd" style="left:1828px;top:622.00px;"><svg width="9" height="3" viewBox="0 0 9 3" ><g fill="#444"><circle cx="1.3" cy="1.5" r=".75"/><circle cx="4.5" cy="1.5" r=".75"/><circle cx="7.7" cy="1.5" r=".75"/></g></svg></span>
<span class="p " style="left:312.6px;top:656.30px;font-size:14.2px">28-Nov-2021</span><span class="p " style="left:522.6px;top:659.40px;"><svg width="15" height="15" viewBox="0 0 512 512" preserveAspectRatio="none"><path fill="#b45c40" d="M507.73 109.1c-2.24-9.03-13.54-12.09-20.12-5.51l-74.36 74.36-67.88-11.31-11.31-67.88 74.36-74.36c6.62-6.62 3.43-17.9-5.66-20.16-47.38-11.74-99.55.91-136.58 37.93-39.64 39.64-50.550 97.1-34.05 147.2L18.74 402.76c-24.99 24.99-24.99 65.51 0 90.5 24.99 24.99 65.51 24.99 90.5 0l213.21-213.21c50.12 16.71 107.47 5.68 147.37-34.22 37.07-37.07 49.7-89.32 37.91-136.73zM64 472c-13.25 0-24-10.75-24-24 0-13.26 10.75-24 24-24s24 10.74 24 24c0 13.25-10.75 24-24 24z"/></svg></span><span class="p " style="left:556.4px;top:657.30px;color:#b45c40;font-size:14.9px;-webkit-text-stroke:0.3px #b45c40">Equipment</span><span class="p " style="left:648px;top:657.30px;color:#3b7fc4;font-size:14.0px">PO-RC1-000398</span><span class="p est" style="top:656.30px;color:#333">$ 10,000.00</span><span class="p " style="left:1538.5px;top:659.50px;"><svg width="15" height="15" viewBox="0 0 15 15" ><circle cx="7.5" cy="7.5" r="6.8" fill="none" stroke="#2f9a3a" stroke-width="1.1"/><path d="M4.2 7.7l2.2 2.2 4.4-4.4" fill="none" stroke="#2f9a3a" stroke-width="1.3" stroke-linecap="round" stroke-linejoin="round"/></svg></span><span class="p " style="left:1684px;top:656.30px;font-size:14.2px">by</span><span class="p " style="left:1706px;top:656.30px;color:#3b7fc4;font-size:13.6px">LTO</span><span class="p rd" style="left:1828px;top:658.20px;"><svg width="9" height="3" viewBox="0 0 9 3" ><g fill="#444"><circle cx="1.3" cy="1.5" r=".75"/><circle cx="4.5" cy="1.5" r=".75"/><circle cx="7.7" cy="1.5" r=".75"/></g></svg></span>
<span class="p " style="left:312.6px;top:692.75px;font-size:14.2px">28-Nov-2021</span><span class="p " style="left:557px;top:693.75px;color:#3b7fc4;font-size:14.0px">Invoice 001</span><span class="p " style="left:650px;top:697.25px;"><svg width="6" height="10" viewBox="0 0 6 10" ><path d="M1 1l4 4-4 4" fill="none" stroke="#d6d6d6" stroke-width="1.1" stroke-linecap="round" stroke-linejoin="round"/></svg></span><span class="p " style="left:676px;top:693.75px;color:#3b7fc4;font-size:14.0px">Asset LG02</span><span class="p " style="left:1538.5px;top:695.95px;"><svg width="15" height="15" viewBox="0 0 15 15" ><circle cx="7.5" cy="7.5" r="6.8" fill="none" stroke="#2f9a3a" stroke-width="1.1"/><path d="M4.2 7.7l2.2 2.2 4.4-4.4" fill="none" stroke="#2f9a3a" stroke-width="1.3" stroke-linecap="round" stroke-linejoin="round"/></svg></span><span class="p " style="left:1684px;top:692.75px;font-size:14.2px">by</span><span class="p " style="left:1706px;top:692.75px;color:#3b7fc4;font-size:13.6px">MCE</span><span class="p rd" style="left:1828px;top:694.65px;"><svg width="9" height="3" viewBox="0 0 9 3" ><g fill="#444"><circle cx="1.3" cy="1.5" r=".75"/><circle cx="4.5" cy="1.5" r=".75"/><circle cx="7.7" cy="1.5" r=".75"/></g></svg></span>
<span class="p " style="left:312.6px;top:728.90px;font-size:14.2px">28-Nov-2021</span><span class="p " style="left:522.6px;top:732.00px;"><svg width="15" height="15" viewBox="0 0 512 512" preserveAspectRatio="none"><path fill="#b45c40" d="M507.73 109.1c-2.24-9.03-13.54-12.09-20.12-5.51l-74.36 74.36-67.88-11.31-11.31-67.88 74.36-74.36c6.62-6.62 3.43-17.9-5.66-20.16-47.38-11.74-99.55.91-136.58 37.93-39.64 39.64-50.550 97.1-34.05 147.2L18.74 402.76c-24.99 24.99-24.99 65.51 0 90.5 24.99 24.99 65.51 24.99 90.5 0l213.21-213.21c50.12 16.71 107.47 5.68 147.37-34.22 37.07-37.07 49.7-89.32 37.91-136.73zM64 472c-13.25 0-24-10.75-24-24 0-13.26 10.75-24 24-24s24 10.74 24 24c0 13.25-10.75 24-24 24z"/></svg></span><span class="p " style="left:556.4px;top:729.90px;color:#b45c40;font-size:14.9px;-webkit-text-stroke:0.3px #b45c40">Equipment</span><span class="p " style="left:648px;top:729.90px;color:#3b7fc4;font-size:14.0px">PO-RC1-000398</span><span class="p est" style="top:728.90px;color:#333">$ 2,800.00</span><span class="p badge" style="left:1539px;top:728.20px;width:57px">Denied</span><span class="p " style="left:1684px;top:728.90px;font-size:14.2px">by</span><span class="p " style="left:1706px;top:728.90px;color:#3b7fc4;font-size:13.6px">LTO</span><span class="p rd" style="left:1828px;top:730.80px;"><svg width="9" height="3" viewBox="0 0 9 3" ><g fill="#444"><circle cx="1.3" cy="1.5" r=".75"/><circle cx="4.5" cy="1.5" r=".75"/><circle cx="7.7" cy="1.5" r=".75"/></g></svg></span>
<span class="p " style="left:312.6px;top:765.40px;font-size:14.2px">29-Nov-2021</span><span class="p " style="left:457px;top:768.80px;"><svg width="18.4" height="14.7" viewBox="0 0 640 512" preserveAspectRatio="none"><path fill="#f2723f" d="M128 352H32c-17.67 0-32 14.33-32 32v96c0 17.67 14.33 32 32 32h96c17.67 0 32-14.33 32-32v-96c0-17.67-14.33-32-32-32zm-24-80h192v48h48v-48h192v48h48v-57.59c0-21.17-17.23-38.41-38.41-38.41H344v-64h40c17.67 0 32-14.33 32-32V32c0-17.67-14.33-32-32-32H256c-17.67 0-32 14.33-32 32v96c0 17.670 14.33 32 32 32h40v64H94.41C73.23 224 56 241.23 56 262.41V320h48v-48zm264 80h-96c-17.67 0-32 14.33-32 32v96c0 17.67 14.33 32 32 32h96c17.67 0 32-14.33 32-32v-96c0-17.67-14.33-32-32-32zm240 0h-96c-17.67 0-32 14.33-32 32v96c0 17.67 14.330 32 32 32h96c17.67 0 32-14.33 32-32v-96c0-17.67-14.33-32-32-32z"/></svg></span><span class="p " style="left:490.3px;top:766.90px;color:#f2723f;font-size:14.8px;-webkit-text-stroke:0.3px #f2723f">Infrastructure Costs</span><span class="p " style="left:640px;top:769.90px;"><svg width="6" height="10" viewBox="0 0 6 10" ><path d="M1 1l4 4-4 4" fill="none" stroke="#d6d6d6" stroke-width="1.1" stroke-linecap="round" stroke-linejoin="round"/></svg></span><span class="p " style="left:663px;top:766.90px;color:#333;font-size:14.8px">Domain registration</span><span class="p est" style="top:765.40px;color:#333">$ 750.00</span><span class="p " style="left:1538.5px;top:768.60px;"><svg width="15" height="15" viewBox="0 0 15 15" ><circle cx="7.5" cy="7.5" r="6.8" fill="none" stroke="#2f9a3a" stroke-width="1.1"/><path d="M4.2 7.7l2.2 2.2 4.4-4.4" fill="none" stroke="#2f9a3a" stroke-width="1.3" stroke-linecap="round" stroke-linejoin="round"/></svg></span><span class="p " style="left:1684px;top:765.40px;font-size:14.2px">by</span><span class="p " style="left:1706px;top:765.40px;color:#3b7fc4;font-size:13.6px">LTO</span>
<span class="p " style="left:312.6px;top:802.00px;font-size:14.2px">29-Nov-2021</span><span class="p " style="left:457px;top:805.70px;"><svg width="18.4" height="14.7" viewBox="0 0 640 512" preserveAspectRatio="none"><path fill="#a4558f" d="M610.5 373.3c2.6-14.1 2.6-28.5 0-42.6l25.8-14.9c3-1.7 4.3-5.2 3.3-8.5-6.7-21.6-18.2-41.2-33.2-57.4-2.3-2.5-6-3.1-9-1.4l-25.8 14.9c-10.9-9.3-23.4-16.5-36.9-21.3v-29.8c0-3.4-2.4-6.4-5.7-7.1-22.3-5-45-4.8-66.2 0-3.3.7-5.7 3.7-5.7 7.1v29.8c-13.5 4.8-26 12-36.9 21.3l-25.8-14.9c-2.9-1.700-6.7-1.1-9 1.4-15 16.2-26.5 35.8-33.2 57.4-1 3.3.4 6.8 3.3 8.5l25.8 14.9c-2.6 14.1-2.6 28.5 0 42.6l-25.8 14.9c-3 1.7-4.3 5.2-3.3 8.5 6.7 21.6 18.2 41.1 33.2 57.4 2.3 2.5 6 3.1 9 1.4l25.8-14.9c10.9 9.3 23.4 16.5 36.9 21.3v29.8c0 3.4 2.4 6.4 5.7 7.1 22.3 5 45 4.8 66.2 0 3.3-.7 5.7-3.7 5.7-7.1v-29.8c13.5-4.8 26-12 36.9-21.3l25.8 14.9c2.9 1.7 6.7 1.1 9-1.4 15-16.2 26.5-35.8 33.2-57.4 1-3.3-.4-6.8-3.3-8.5l-25.8-14.9zM496 400.5c-26.8 0-48.5-21.8-48.5-48.5s21.8-48.5 48.5-48.5 48.5 21.8 48.5 48.5-21.7 48.5-48.5 48.5zM224 256c70.7 0 128-57.3 128-128S294.7 0 224 0 96 57.3 96 128s57.3 128 128 128zm201.2 226.5c-2.3-1.2-4.6-2.6-6.8-3.9l-7.9 4.6c-6 3.4-12.8 5.3-19.6 5.300-10.9 0-21.4-4.6-28.9-12.6-18.3-19.8-32.3-43.9-40.2-69.6-5.5-17.7 1.9-36.4 17.9-45.7l7.9-4.6c-.1-2.6-.1-5.2 0-7.8l-7.9-4.6c-16-9.2-23.4-28-17.9-45.7.9-2.9 2.2-5.8 3.2-8.7-3.8-.3-7.5-1.2-11.4-1.2h-16.7c-22.2 10.2-46.9 16-72.9 16s-50.6-5.8-72.9-16h-16.7C60.2 288 0 348.2 0 422.4V464c0 26.5 21.5 48 48 48h352c10.1 0 19.5-3.2 27.3-8.5-1.2-3.8-2.1-7.7-2.1-11.9v-9.1z"/></svg></span><span class="p " style="left:490.3px;top:804.00px;color:#a4558f;font-size:14.0px;-webkit-text-stroke:0.3px #a4558f">Resource Costs</span><span class="p " style="left:610px;top:806.50px;"><svg width="6" height="10" viewBox="0 0 6 10" ><path d="M1 1l4 4-4 4" fill="none" stroke="#d6d6d6" stroke-width="1.1" stroke-linecap="round" stroke-linejoin="round"/></svg></span><span class="p " style="left:633px;top:804.00px;color:#333;font-size:14.4px">UI/UX works</span><span class="p est" style="top:802.00px;color:#333">$ 11,250.00</span><span class="p badge" style="left:1539px;top:800.80px;width:76px">Cancelled</span>
<span class="p " style="left:312.6px;top:837.70px;font-size:14.2px">26-Nov-2021</span><span class="p " style="left:457.5px;top:840.32px;"><svg width="15.6" height="15.6" viewBox="0 0 512 512" preserveAspectRatio="none"><path fill="#b45c40" d="M507.73 109.1c-2.24-9.03-13.54-12.09-20.12-5.51l-74.36 74.36-67.88-11.31-11.31-67.88 74.36-74.36c6.62-6.62 3.43-17.9-5.66-20.16-47.38-11.74-99.55.91-136.58 37.93-39.64 39.64-50.550 97.1-34.05 147.2L18.74 402.76c-24.99 24.99-24.99 65.51 0 90.5 24.99 24.99 65.51 24.99 90.5 0l213.21-213.21c50.12 16.71 107.47 5.68 147.37-34.22 37.07-37.07 49.7-89.32 37.91-136.73zM64 472c-13.25 0-24-10.75-24-24 0-13.26 10.75-24 24-24s24 10.74 24 24c0 13.25-10.75 24-24 24z"/></svg></span><span class="p " style="left:490.3px;top:837.90px;color:#b45c40;font-size:14.9px;-webkit-text-stroke:0.3px #b45c40">Equipment</span><span class="p " style="left:583px;top:842.20px;"><svg width="6" height="10" viewBox="0 0 6 10" ><path d="M1 1l4 4-4 4" fill="none" stroke="#d6d6d6" stroke-width="1.1" stroke-linecap="round" stroke-linejoin="round"/></svg></span><span class="p " style="left:602px;top:837.90px;color:#333;font-size:13.9px">Camera Canon EOS 800D</span><span class="p est" style="top:837.70px;color:#333">$ 2,458.00</span><span class="p " style="left:1538.5px;top:840.90px;"><svg width="15" height="15" viewBox="0 0 15 15" ><circle cx="7.5" cy="7.5" r="6.8" fill="none" stroke="#2f9a3a" stroke-width="1.1"/><path d="M4.2 7.7l2.2 2.2 4.4-4.4" fill="none" stroke="#2f9a3a" stroke-width="1.3" stroke-linecap="round" stroke-linejoin="round"/></svg></span><span class="p " style="left:1684px;top:837.70px;font-size:14.2px">by</span><span class="p " style="left:1706px;top:837.70px;color:#3b7fc4;font-size:13.6px">LTO</span><span class="p " style="left:1429.6px;top:839.50px;"><svg width="12" height="16" viewBox="0 0 12 16" ><g fill="none" stroke="#3b7fc4" stroke-linejoin="round" stroke-linecap="round"><path d="M1.4 1.1h6.6l2.9 3v9.8c0 .6-.4 1-1 1H2.4c-.6 0-1-.4-1-1V2.1c0-.6.4-1 1-1z" stroke-width="1.05"/><path d="M7.6 1.4v2.9h2.9" stroke-width="1"/><path d="M5.1 5.2l.4 3.6M5.5 8.8L2.7 11.6M5.5 8.8l3 .9" stroke-width="1"/></g></svg></span>
</div>

<div class="menu"></div>
<div class="mi"></div>
<span class="abs" style="position:absolute;left:1662px;top:762.5px"><svg width="18" height="16" viewBox="0 0 18 16" ><g fill="none" stroke="#555" stroke-width="1.3" stroke-linecap="round" stroke-linejoin="round"><path d="M8 2.4H2.2c-.6 0-1 .4-1 1v10.8c0 .6.4 1 1 1h10.8c.6 0 1-.4 1-1V8.6"/><path d="M14.6 1.2l2 2-7.4 7.4-2.8.8.8-2.8z"/></g></svg></span>
<div class="mtxt" style="left:1690.8px;top:761px">edit</div>
<span class="abs" style="position:absolute;left:1663px;top:801.5px"><svg width="16" height="16" viewBox="0 0 16 16" ><circle cx="8" cy="8" r="7" fill="none" stroke="#555" stroke-width="1.2"/><path d="M5.6 5.6l4.8 4.8M10.4 5.6l-4.8 4.8" stroke="#555" stroke-width="1.3" stroke-linecap="round"/></svg></span>
<div class="mtxt" style="left:1690.8px;top:799.5px">cancel</div>
</body></html>
